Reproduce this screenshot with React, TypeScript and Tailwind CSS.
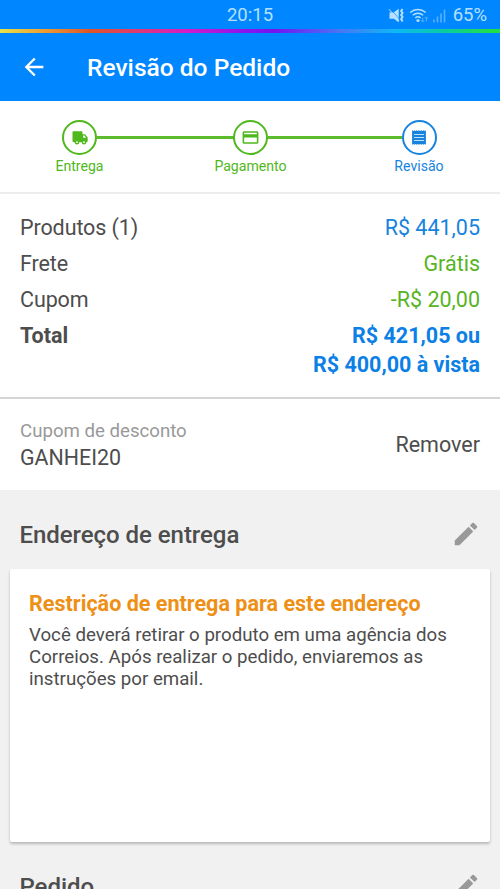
import type { ReactNode } from 'react';
import { MdArrowBack, MdCreditCard, MdEdit } from 'react-icons/md';

function TruckIcon() {
  return (
    <svg width="16" height="14" viewBox="0 0 16 14" fill="currentColor">
      <path d="M1.4.2h8.1c.6 0 1 .4 1 1v2h2.100c.4 0 .7.2.9.5l1.800 2.400c.2.3.4.7.4 1v3c0 .7-.4 1.100-1.100 1.100h-.3a2.300 2.300 0 0 1-4.600 0H7.300a2.300 2.300 0 0 1-4.600 0H1.500C.900 11.200.500 10.800.500 10.100V1.200c0-.6.400-1 .900-1Z" />
      <circle cx="5" cy="11.200" r=".9" fill="#fff" />
      <circle cx="12" cy="11.200" r=".9" fill="#fff" />
      <path d="M11.200 4.500h1.300L14 6.700H11.200Z" fill="#fff" />
    </svg>
  );
}

function ReceiptIcon() {
  return (
    <svg width="14" height="15" viewBox="0 0 14 15" fill="currentColor">
      <path d="M.1.200 1.200.900 2.400.200 3.500.900 4.700.200 5.800.900 7 .200 8.200.900 9.300.200 10.500.900 11.600.200 12.800.900 13.900.200V14.800L12.800 14.100 11.600 14.800 10.500 14.100 9.300 14.800 8.200 14.100 7 14.800 5.800 14.100 4.700 14.800 3.500 14.100 2.400 14.800 1.200 14.100.1 14.800Z" />
      <path d="M2 4.500h10M2 7.500h10M2 10.500h10" stroke="#fff" strokeWidth=".75" />
    </svg>
  );
}

function StatusIcons() {
  return (
    <svg width="60" height="18" viewBox="0 0 60 18" fill="none" className="text-[#b5e0ff]">
      <path d="M1.500 5.500H5.500L10.700 1.800V15.500L6 11.700H1.500Z" fill="currentColor" />
      <path d="M2 1.500 11.500 12" stroke="#0087ff" strokeWidth=".6" />
      <path d="M1 2.200 11 14" stroke="currentColor" strokeWidth="1" />
      <path d="m14.500 2-1.300 2 1.300 2-1.300 2 1.300 2-1.300 2 1.300 2.500" stroke="currentColor" strokeWidth="2" />
      <path d="M22.200 5.500c4.500-4 11-4 15.500 0M24.800 8.300c3-2.700 7.300-2.700 10.300 0M27.300 11c1.600-1.400 3.700-1.400 5.300 0" stroke="currentColor" strokeWidth="1.500" />
      <circle cx="30" cy="13.500" r="1.600" fill="currentColor" />
      <path d="M34.700 10.500v4.500m-1.500-1.600 1.500 1.700 1.500-1.700M38.400 14.500V10m-1.500 1.600 1.500-1.700 1.500 1.700" stroke="#56b1ff" strokeWidth="1" />
      <path d="M46 12.500V15.500M49.500 9.500V15.500M53 6.500V15.500M56.500 2.500V15.500" stroke="#56b1ff" strokeWidth="1.600" />
    </svg>
  );
}

function Step({ label, color, children }: { label: string; color: string; children: ReactNode }) {
  return (
    <div className={`flex w-[76px] flex-col items-center ${color}`}>
      <div className="flex h-[35px] w-[35px] items-center justify-center rounded-full border-2 border-current">
        {children}
      </div>
      <span className="mt-[2px] text-[14.100px] leading-[18px]">{label}</span>
    </div>
  );
}

function Row({ label, value, color }: { label: string; value: string; color: string }) {
  return (
    <div className="flex justify-between">
      <span className="tracking-[-0.1px]">{label}</span>
      <span className={color}>{value}</span>
    </div>
  );
}

function SectionHeader({ title }: { title: string }) {
  return (
    <div className="flex items-center justify-between pr-[19px] pl-[19.500px]">
      <h2 className="text-[24px] leading-[30px] font-medium tracking-[-0.05px]">{title}</h2>
      <MdEdit size={30} className="mb-[1px] -mt-[1px] text-[#999]" />
    </div>
  );
}

export default function App() {
  return (
    <div className="h-[889px] w-full overflow-hidden bg-[#f1f1f1] font-['Roboto','Liberation_Sans',sans-serif] text-[#4d4d4d]">
      <header className="h-[101px] bg-[#0087ff]">
        <div className="grid h-[29px] grid-cols-3 items-center text-[18.500px] text-[#b5e0ff]">
          <span />
          <span className="pt-[2px] text-center">20:15</span>
          <div className="flex items-center justify-end pt-[2px] pr-[13px]">
            <StatusIcons />
            <span className="ml-[5px]">65%</span>
          </div>
        </div>
        <div className="h-1 bg-[linear-gradient(90deg,#e8e34a_0%,#ee9b32_9%,#df5428_18%,#df3975_28%,#d81bc4_37%,#8a15ed_49%,#7415f0_55%,#4a75f5_68%,#0eb8f5_79%,#08cba8_88%,#22df48_98%)]" />
        <div className="flex h-[68px] items-center pl-[20px]">
          <MdArrowBack size={28} className="text-white" />
          <h1 className="ml-[39px] pt-[1px] text-[24.550px] leading-[30px] font-medium text-white">Revisão do Pedido</h1>
        </div>
      </header>

      <nav className="flex h-[91px] bg-white pt-[19px] pr-[43px] pl-[41.500px]">
        <Step label="Entrega" color="text-[#4fb81c]"><TruckIcon /></Step>
        <div className="-mx-[21px] mt-[16px] h-[3px] flex-1 bg-[#5dbc2b]" />
        <Step label="Pagamento" color="text-[#4fb81c]"><MdCreditCard size={19} /></Step>
        <div className="-mx-[21px] mt-[16px] h-[3px] w-[134.500px] bg-[#5dbc2b]" />
        <Step label="Revisão" color="text-[#1683df]"><ReceiptIcon /></Step>
      </nav>

      <section className="h-[207px] border-t-2 border-b-2 border-t-[#ededed] border-b-[#d5d5d5] bg-white px-[20px] pt-[19px] text-[21.500px] leading-[29px]">
        <div className="flex flex-col gap-[7px]">
          <Row label="Produtos (1)" value="R$ 441,05" color="text-[#1683df]" />
          <Row label="Frete" value="Grátis" color="text-[#57b424]" />
          <Row label="Cupom" value="-R$ 20,00" color="text-[#57b424]" />
          <div className="flex justify-between font-bold">
            <span>Total</span>
            <span className="text-right text-[#0c80e6]">R$ 421,05 ou<br />R$ 400,00 à vista</span>
          </div>
        </div>
      </section>

      <section className="flex h-[91px] items-center justify-between bg-white px-[20px]">
        <div>
          <p className="text-[18.650px] leading-[26px] text-[#999]">Cupom de desconto</p>
          <p className="text-[21.400px] leading-[28px]">GANHEI20</p>
        </div>
        <span className="pt-[2px] text-[21.500px]">Remover</span>
      </section>

      <section className="pt-[30px]">
        <SectionHeader title="Endereço de entrega" />
        <div className="mx-[10px] mt-[19px] h-[273px] rounded-[2px] bg-white px-[19px] pt-[21px] shadow-[0_2px_3px_rgba(0,0,0,0.24)]">
          <h3 className="text-[21.550px] leading-[28px] font-bold text-[#ee8f16]">Restrição de entrega para este endereço</h3>
          <p className="mt-[6px] text-[18.680px] leading-[22px]">
            Você deverá retirar o produto em uma agência dos<br />
            Correios. Após realizar o pedido, enviaremos as<br />
            instruções por email.
          </p>
        </div>
      </section>

      <section className="pt-[30px]">
        <SectionHeader title="Pedido" />
      </section>
    </div>
  );
}
